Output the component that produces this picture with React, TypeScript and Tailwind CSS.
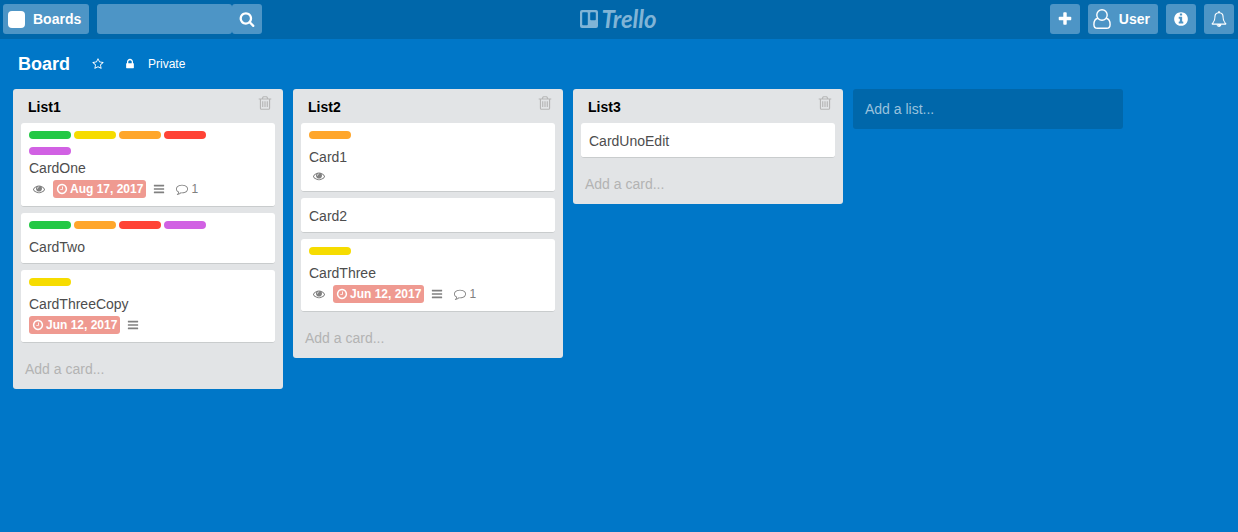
import { useState } from 'react';
import type { ReactNode } from 'react';

const icons = {
  search:
    'M1216 832q0-185-131.5-316.5t-316.5-131.5-316.5 131.5-131.5 316.5 131.5 316.5 316.5 131.5 316.5-131.5 131.5-316.5zm512 832q0 52-38 90t-90 38q-54 0-90-38l-343-342q-179 124-399 124-143 0-273.5-55.5t-225-150-150-225-55.5-273.5 55.5-273.5 150-225 225-150 273.5-55.5 273.5 55.5 225 150 150 225 55.5 273.5q0 220-124 399l343 343q37 37 37 90z',
  plus: 'M1600 736v192q0 40-28 68t-68 28h-416v416q0 40-28 68t-68 28h-192q-40 0-68-28t-28-68v-416h-416q-40 0-68-28t-28-68v-192q0-40 28-68t68-28h416v-416q0-40 28-68t68-28h192q40 0 68 28t28 68v416h416q40 0 68 28t28 68z',
  bars: 'M1664 1344v128q0 26-19 45t-45 19h-1408q-26 0-45-19t-19-45v-128q0-26 19-45t45-19h1408q26 0 45 19t19 45zm0-512v128q0 26-19 45t-45 19h-1408q-26 0-45-19t-19-45v-128q0-26 19-45t45-19h1408q26 0 45 19t19 45zm0-512v128q0 26-19 45t-45 19h-1408q-26 0-45-19t-19-45v-128q0-26 19-45t45-19h1408q26 0 45 19t19 45z',
  eye: 'M1664 960q-152-236-381-353 61 104 61 225 0 185-131.5 316.5t-316.5 131.5-316.5-131.5-131.5-316.5q0-121 61-225-229 117-381 353 133 205 333.5 326.5t434.5 121.5 434.5-121.5 333.5-326.5zm-720-384q0-20-14-34t-34-14q-125 0-214.5 89.5t-89.5 214.5q0 20 14 34t34 14 34-14 14-34q0-86 61-147t147-61q20 0 34-14t14-34zm848 384q0 34-20 69-140 230-376.5 368.5t-499.5 138.5-499.5-139-376.5-368q-20-35-20-69t20-69q140-229 376.5-368t499.5-139 499.5 139 376.5 368q20 35 20 69z',
  clock:
    'M1024 544v448q0 14-9 23t-23 9h-320q-14 0-23-9t-9-23v-64q0-14 9-23t23-9h224v-352q0-14 9-23t23-9h64q14 0 23 9t9 23zm416 352q0-148-73-273t-198-198-273-73-273 73-198 198-73 273 73 273 198 198 273 73 273-73 198-198 73-273zm224 0q0 209-103 385.5t-279.5 279.5-385.5 103-385.5-103-279.5-279.5-103-385.5 103-385.5 279.5-279.5 385.5-103 385.5 103 279.5 279.5 103 385.5z',
  trash:
    'M704 736v576q0 14-9 23t-23 9h-64q-14 0-23-9t-9-23v-576q0-14 9-23t23-9h64q14 0 23 9t9 23zm256 0v576q0 14-9 23t-23 9h-64q-14 0-23-9t-9-23v-576q0-14 9-23t23-9h64q14 0 23 9t9 23zm256 0v576q0 14-9 23t-23 9h-64q-14 0-23-9t-9-23v-576q0-14 9-23t23-9h64q14 0 23 9t9 23zm128 724v-948h-896v948q0 22 7 40.5t14.5 27 10.5 8.5h832q3 0 10.5-8.5t14.5-27 7-40.5zm-672-1076h448l-48-117q-7-9-17-11h-317q-10 2-17 11zm928 32v64q0 14-9 23t-23 9h-96v948q0 83-47 143.5t-113 60.5h-832q-66 0-113-58.5t-47-141.5v-952h-96q-14 0-23-9t-9-23v-64q0-14 9-23t23-9h309l70-167q15-37 54-63t79-26h320q40 0 79 26t54 63l70 167h309q14 0 23 9t9 23z',
  star: 'M1201 1004l306-297-422-62-189-382-189 382-422 62 306 297-73 421 378-199 377 199zm527-357q0 22-26 48l-363 354 86 500q1 7 1 20 0 50-41 50-19 0-40-12l-449-236-449 236q-22 12-40 12-21 0-31.5-14.5t-10.5-35.5q0-6 2-20l86-500-364-354q-25-27-25-48 0-37 56-46l502-73 225-455q19-41 49-41t49 41l225 455 502 73q56 9 56 46z',
  lock: 'M640 768h512v-192q0-106-75-181t-181-75-181 75-75 181v192zm832 96v576q0 40-28 68t-68 28h-960q-40 0-68-28t-28-68v-576q0-40 28-68t68-28h32v-192q0-184 132-316t316-132 316 132 132 316v192h32q40 0 68 28t28 68z',
  info: 'M1152 1376v-160q0-14-9-23t-23-9h-96v-512q0-14-9-23t-23-9h-320q-14 0-23 9t-9 23v160q0 14 9 23t23 9h96v320h-96q-14 0-23 9t-9 23v160q0 14 9 23t23 9h448q14 0 23-9t9-23zm-128-896v-160q0-14-9-23t-23-9h-192q-14 0-23 9t-9 23v160q0 14 9 23t23 9h192q14 0 23-9t9-23zm640 416q0 209-103 385.5t-279.5 279.5-385.5 103-385.5-103-279.5-279.5-103-385.5 103-385.5 279.5-279.5 385.5-103 385.5 103 279.5 279.5 103 385.5z',
  comment:
    'M896 384q-204 0-381.5 69.5t-282 187.5-104.5 255q0 112 71.5 213.5t201.5 175.5l87 50-27 96q-24 91-70 172 152-63 275-171l43-38 57 6q69 8 130 8 204 0 381.5-69.5t282-187.5 104.5-255-104.5-255-282-187.5-381.5-69.5zm896 512q0 174-120 321.5t-326 233-450 85.5q-70 0-145-8-198 175-460 242-49 14-114 22h-5q-15 0-27-10.5t-16-27.5v-1q-3-4-.5-12t2-10 4.5-9.5l6-9 7-8.5 8-9q7-8 31-34.5t34.5-38 31-39.5 32.5-51 27-59 26-76q-157-89-247.5-220t-90.5-281q0-174 120-321.5t326-233 450-85.5 450 85.5 326 233 120 321.5z',
  bell: 'M912 1696q0-16-16-16-59 0-101.5-42.5t-42.5-101.5q0-16-16-16t-16 16q0 73 51.5 124.5t124.5 51.5q16 0 16-16zm-666-288h1300q-266-300-266-832 0-51-24-105t-69-103-121.5-80.5-169.5-31.5-169.5 31.5-121.5 80.5-69 103-24 105q0 532-266 832zm1482 0q0 52-38 90t-90 38h-448q0 106-75 181t-181 75-181-75-75-181h-448q-52 0-90-38t-38-90q50-42 91-88t85-119.5 74.5-158.5 50-206 19.5-260q0-152 117-282.5t307-158.5q-8-19-8-39 0-40 28-68t68-28 68 28 28 68q0 20-8 39 190 28 307 158.5t117 282.5q0 139 19.5 260t50 206 74.5 158.5 85 119.5 91 88z',
};

function Icon({ name, className }: { name: keyof typeof icons; className: string }) {
  return (
    <svg viewBox="0 0 1792 1792" fill="currentColor" aria-hidden="true" className={'shrink-0 ' + className}>
      <path d={icons[name]} />
    </svg>
  );
}

function UserIcon() {
  return (
    <svg viewBox="0 0 18 20" fill="none" stroke="currentColor" strokeWidth="1.4" aria-hidden="true" className="h-5 w-[18px] shrink-0">
      <circle cx="9" cy="6" r="5.2" />
      <path d="M4.800 9.200C2.200 9.800 .9 12.400 .9 15.400C.9 17.800 2.200 19.200 4.400 19.200H13.600C15.800 19.200 17.100 17.800 17.100 15.400C17.100 12.400 15.800 9.800 13.200 9.200" />
    </svg>
  );
}

function Logo() {
  return (
    <a href="#" aria-label="Trello" className="flex items-center gap-[3px] text-[#80b4d6]">
      <svg viewBox="0 0 18 18" aria-hidden="true" className="size-[18px]">
        <path
          fill="currentColor"
          fillRule="evenodd"
          d="M2 0h14a2 2 0 0 1 2 2v14a2 2 0 0 1-2 2H2a2 2 0 0 1-2-2V2a2 2 0 0 1 2-2zM3 2.200a.8.8 0 0 0-.8.8v11.400a.8.8 0 0 0 .8.8h4a.8.8 0 0 0 .8-.8V3a.8.8 0 0 0-.8-.8zM11 2.200a.8.8 0 0 0-.8.8v6.400a.8.8 0 0 0 .8.8h4a.8.8 0 0 0 .8-.8V3a.8.8 0 0 0-.8-.8z"
        />
      </svg>
      <span className="font-['Lato',sans-serif] text-2xl leading-6 font-bold italic">Trello</span>
    </a>
  );
}

type Color = 'green' | 'yellow' | 'orange' | 'red' | 'purple';
const colors: Record<Color, string> = {
  green: 'bg-[#24c845]',
  yellow: 'bg-[#f6dc00]',
  orange: 'bg-[#ffa62b]',
  red: 'bg-[#ff4336]',
  purple: 'bg-[#d161e3]',
};

type CardData = {
  title: string;
  labels?: Color[];
  watched?: boolean;
  due?: string;
  described?: boolean;
  comments?: number;
};

const board: { title: string; cards: CardData[] }[] = [
  {
    title: 'List1',
    cards: [
      {
        title: 'CardOne',
        labels: ['green', 'yellow', 'orange', 'red', 'purple'],
        watched: true,
        due: 'Aug 17, 2017',
        described: true,
        comments: 1,
      },
      { title: 'CardTwo', labels: ['green', 'orange', 'red', 'purple'] },
      { title: 'CardThreeCopy', labels: ['yellow'], due: 'Jun 12, 2017', described: true },
    ],
  },
  {
    title: 'List2',
    cards: [
      { title: 'Card1', labels: ['orange'], watched: true },
      { title: 'Card2' },
      { title: 'CardThree', labels: ['yellow'], watched: true, due: 'Jun 12, 2017', described: true, comments: 1 },
    ],
  },
  { title: 'List3', cards: [{ title: 'CardUnoEdit' }] },
];

function Labels({ items }: { items: Color[] }) {
  const wraps = items.length > 4;
  return (
    <ul className={'flex max-w-48 flex-wrap gap-x-[3px] gap-y-2 ' + (wraps ? 'mb-1' : 'mb-[9px]')}>
      {items.map((c) => (
        <li key={c} className={'h-2 w-[42px] rounded-[4px] ' + colors[c]} />
      ))}
    </ul>
  );
}

function Card({ card }: { card: CardData }) {
  const hasBadges = card.watched || card.due || card.described;
  return (
    <li
      className={
        'rounded-[3px] border-b border-[#c9cccd] bg-white px-2 pt-2 text-[#4d4d4d] ' + (hasBadges ? 'pb-2' : 'pb-[7px]')
      }
    >
      {card.labels && <Labels items={card.labels} />}
      <h3 className={'text-sm ' + (card.labels ? 'leading-[18px]' : 'pt-px leading-[18px]')}>{card.title}</h3>
      {hasBadges && (
        <div className="mt-[3px] flex min-h-3.5 items-center text-xs leading-[18px] text-[#808080]">
          {card.watched && <Icon name="eye" className="mx-1 size-3" />}
          {card.due && (
            <span
              className={
                'flex items-center gap-0.5 rounded-[3px] bg-[#ef9a91] px-[3px] font-bold text-white ' +
                (card.watched ? 'ml-1' : '')
              }
            >
              <Icon name="clock" className="size-3" />
              {card.due}
            </span>
          )}
          {card.described && <Icon name="bars" className="ml-[7px] size-3" />}
          {card.comments && (
            <span className="ml-[11px] flex items-center gap-[3px]">
              <Icon name="comment" className="size-3" />
              {card.comments}
            </span>
          )}
        </div>
      )}
    </li>
  );
}

function HeaderButton({ label, className, children }: { label?: string; className: string; children: ReactNode }) {
  return (
    <button
      type="button"
      aria-label={label}
      className={'flex h-[30px] items-center rounded-[3px] bg-[#4d95c6] text-sm font-bold ' + className}
    >
      {children}
    </button>
  );
}

export default function App() {
  const [query, setQuery] = useState('');
  return (
    <div className="min-h-screen bg-[#0077c8] font-['Liberation_Sans',Arial,sans-serif] text-white">
      <header className="grid h-[39px] grid-cols-[1fr_auto_1fr] items-center bg-[#0067aa] pr-1 pb-px pl-[3px]">
        <div className="flex gap-2">
          <HeaderButton className="gap-2 pr-2 pl-[5px]">
            <span className="size-[17px] rounded-[4px] bg-white" />
            <span className="pb-px">Boards</span>
          </HeaderButton>
          <form className="flex" onSubmit={(e) => e.preventDefault()}>
            <input
              type="text"
              aria-label="Search"
              value={query}
              onChange={(e) => setQuery(e.target.value)}
              className="h-[30px] w-[135px] rounded-[3px] bg-[#4d95c6] px-2 text-sm outline-none"
            />
            <HeaderButton label="Run search" className="w-[30px] justify-center">
              <Icon name="search" className="size-4" />
            </HeaderButton>
          </form>
        </div>
        <Logo />
        <div className="flex justify-end gap-2">
          <HeaderButton label="Create" className="w-[30px] justify-center">
            <Icon name="plus" className="size-4" />
          </HeaderButton>
          <HeaderButton className="gap-2 pr-2 pl-[5px]">
            <UserIcon />
            <span className="pb-px">User</span>
          </HeaderButton>
          <HeaderButton label="Information" className="w-[30px] justify-center">
            <Icon name="info" className="size-4" />
          </HeaderButton>
          <HeaderButton label="Notifications" className="w-[30px] justify-center">
            <Icon name="bell" className="size-4" />
          </HeaderButton>
        </div>
      </header>

      <main>
        <div className="flex h-[50px] items-center px-[18px]">
          <h1 className="text-lg font-bold">Board</h1>
          <button type="button" aria-label="Star board" className="ml-[22px]">
            <Icon name="star" className="size-3" />
          </button>
          <button type="button" className="ml-5 flex items-center gap-3 text-xs">
            <Icon name="lock" className="size-3" />
            Private
          </button>
        </div>

        <div className="flex items-start gap-2.5 px-[13px]">
          {board.map((list) => (
            <section key={list.title} className="w-[270px] shrink-0 rounded-[3px] bg-[#e2e4e6] px-2">
              <div className="flex h-[34px] items-center justify-between pr-0.5 pl-[7px]">
                <h2 className="pt-0.5 text-sm font-bold text-black">{list.title}</h2>
                <button type="button" aria-label={'Delete ' + list.title} className="mb-1.5 text-[#b6b6b6]">
                  <Icon name="trash" className="size-4" />
                </button>
              </div>
              <ul className="flex flex-col gap-1.5">
                {list.cards.map((card) => (
                  <Card key={card.title} card={card} />
                ))}
              </ul>
              <button type="button" className="block h-[46px] w-full px-1 pt-1.5 text-left text-sm text-[#b3b3b3]">
                Add a card...
              </button>
            </section>
          ))}
          <button
            type="button"
            className="h-10 w-[270px] shrink-0 rounded-[3px] bg-[#0067aa] px-3 text-left text-sm text-[#99c2dd]"
          >
            Add a list...
          </button>
        </div>
      </main>
    </div>
  );
}
